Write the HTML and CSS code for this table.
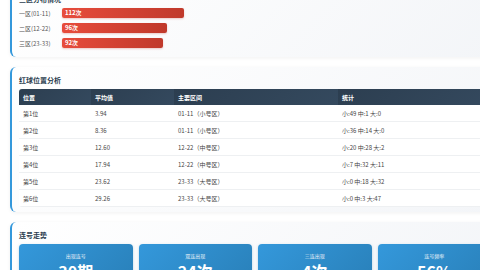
FILE: index.html
```html
<!DOCTYPE html>
<html lang="zh">
<head>
<meta charset="utf-8">
<link rel="stylesheet" href="styles.css">
</head>
<body>
<main class="page">
  <section class="card">
    <h2 class="card-title">三区分布情况</h2>
    <div class="zones">
      <div class="zone-row">
        <span class="zone-label">一区(01-11)</span>
        <div class="zone-bar" style="width:122px">112次</div>
      </div>
      <div class="zone-row">
        <span class="zone-label">二区(12-22)</span>
        <div class="zone-bar" style="width:105px">96次</div>
      </div>
      <div class="zone-row">
        <span class="zone-label">三区(23-33)</span>
        <div class="zone-bar" style="width:101px">92次</div>
      </div>
    </div>
  </section>

  <section class="card">
    <h2 class="card-title">红球位置分析</h2>
    <table class="pos-table">
      <colgroup>
        <col class="c1"><col class="c2"><col class="c3"><col class="c4">
      </colgroup>
      <thead>
        <tr><th>位置</th><th>平均值</th><th>主要区间</th><th>统计</th></tr>
      </thead>
      <tbody>
        <tr><td>第1位</td><td>3.94</td><td>01-11（小号区）</td><td>小:49 中:1 大:0</td></tr>
        <tr><td>第2位</td><td>8.36</td><td>01-11（小号区）</td><td>小:36 中:14 大:0</td></tr>
        <tr><td>第3位</td><td>12.60</td><td>12-22（中号区）</td><td>小:20 中:28 大:2</td></tr>
        <tr><td>第4位</td><td>17.94</td><td>12-22（中号区）</td><td>小:7 中:32 大:11</td></tr>
        <tr><td>第5位</td><td>23.62</td><td>23-33（大号区）</td><td>小:0 中:18 大:32</td></tr>
        <tr><td>第6位</td><td>29.26</td><td>23-33（大号区）</td><td>小:0 中:3 大:47</td></tr>
      </tbody>
    </table>
  </section>

  <section class="card">
    <h2 class="card-title">连号走势</h2>
    <div class="stats">
      <div class="stat"><div class="stat-label">出现连号</div><div class="stat-value">30期</div></div>
      <div class="stat"><div class="stat-label">双连出现</div><div class="stat-value">24次</div></div>
      <div class="stat"><div class="stat-label">三连出现</div><div class="stat-value">4次</div></div>
      <div class="stat"><div class="stat-label">连号频率</div><div class="stat-value">56%</div></div>
    </div>
  </section>
</main>
</body>
</html>
```

FILE: styles.css
```css
html, body {
  margin: 0;
  padding: 0;
  overflow: hidden;
  background: #ffffff;
  font-family: "Noto Sans CJK SC", "Noto Sans", sans-serif;
  color: #333;
}

.page {
  display: flex;
  flex-direction: column;
  gap: 10px;
  width: 490px;
  margin-top: -14px;
  padding-left: 10px;
}

.card {
  background: linear-gradient(135deg, #ffffff 0%, #f3f5f8 100%);
  border-left: 2px solid #3498db;
  border-radius: 6px;
  box-shadow: 0 1px 4px rgba(0, 0, 0, 0.06);
  padding: 8px 9px 5px 7px;
}

.card-title {
  margin: 0 0 4px 0;
  font-size: 7px;
  line-height: 10px;
  font-weight: bold;
  color: #2c3e50;
}

.zones {
  display: flex;
  flex-direction: column;
  gap: 5px;
  margin-top: 1px;
  padding-bottom: 4px;
}

.zone-row {
  display: flex;
  align-items: center;
  height: 10px;
}

.zone-label {
  width: 43px;
  flex: none;
  font-size: 6px;
  color: #555;
}

.zone-bar {
  height: 10px;
  line-height: 10px;
  padding-left: 3px;
  box-sizing: border-box;
  border-radius: 2px;
  background: linear-gradient(90deg, #e74c3c, #c0392b);
  box-shadow: 0 1px 2px rgba(192, 57, 43, 0.25);
  color: #fff;
  font-size: 6px;
  font-weight: bold;
}

.pos-table {
  width: 472px;
  table-layout: fixed;
  border-collapse: collapse;
  border-radius: 3px;
  overflow: hidden;
  background: #fff;
  font-size: 6px;
}

.c1 { width: 72px; }
.c2 { width: 83px; }
.c3 { width: 164px; }
.c4 { width: 153px; }

.pos-table th {
  height: 16px;
  padding: 0 4px;
  text-align: left;
  color: #fff;
  font-weight: bold;
  background: linear-gradient(135deg, #2c3e50, #34495e);
}

.pos-table td {
  height: 16px;
  padding: 0 4px;
  color: #444;
  border-bottom: 1px solid #eef0f2;
}

.stats {
  display: grid;
  grid-template-columns: repeat(4, 1fr);
  gap: 6px;
}

.stat {
  border-radius: 4px;
  background: linear-gradient(135deg, #3498db, #2980b9);
  color: #fff;
  text-align: center;
  padding: 8px 4px 6px;
  box-shadow: 0 1px 3px rgba(41, 128, 185, 0.3);
}

.stat-label {
  font-size: 5px;
  line-height: 7px;
  opacity: 0.9;
}

.stat-value {
  margin-top: 3px;
  font-size: 16px;
  line-height: 18px;
  font-weight: bold;
}
```
